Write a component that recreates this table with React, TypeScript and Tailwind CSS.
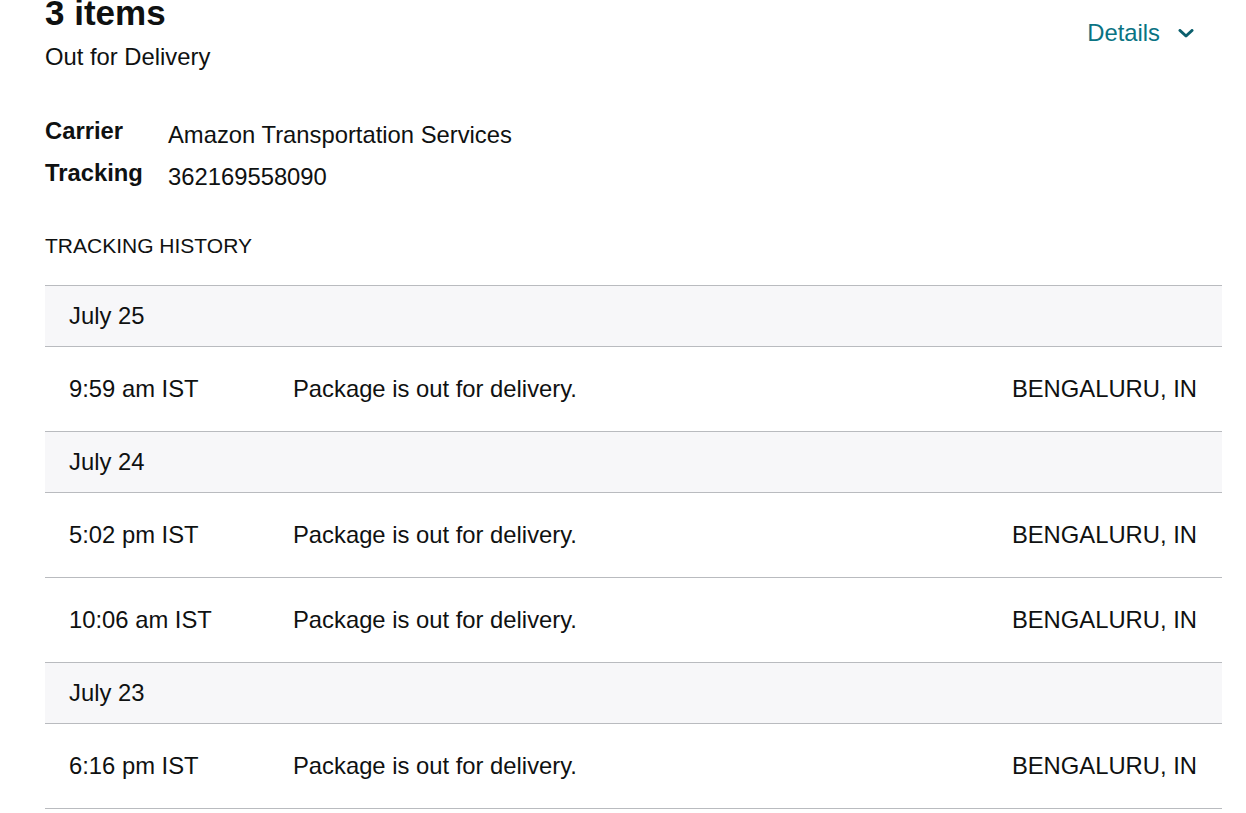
const events = [
  { date: 'July 25', items: [{ time: '9:59 am IST', text: 'Package is out for delivery.', place: 'BENGALURU, IN' }] },
  {
    date: 'July 24',
    items: [
      { time: '5:02 pm IST', text: 'Package is out for delivery.', place: 'BENGALURU, IN' },
      { time: '10:06 am IST', text: 'Package is out for delivery.', place: 'BENGALURU, IN' },
    ],
  },
  { date: 'July 23', items: [{ time: '6:16 pm IST', text: 'Package is out for delivery.', place: 'BENGALURU, IN' }] },
];

function Chevron() {
  return (
    <svg width="16" height="9" viewBox="0 0 16 9" fill="none">
      <path d="M2 1.5 L8 7 L14 1.5" stroke="#0b5f6d" strokeWidth="3" strokeLinecap="round" strokeLinejoin="round" />
    </svg>
  );
}

export default function App() {
  return (
    <div
      className="min-h-screen w-full overflow-hidden bg-white pl-[45px] pr-[24px] text-[#0f1111]"
      style={{ fontFamily: '"Liberation Sans", Arial, sans-serif' }}
    >
      <div className="-mt-[7px] flex items-start justify-between">
        <div>
          <h1 className="text-[35px] font-bold leading-[40px]">3 items</h1>
          <div className="mt-[9px] text-[23.8px] leading-[30px]">Out for Delivery</div>
        </div>
        <button className="mt-[25px] mr-[28px] flex items-center gap-[18px] text-[23.8px] leading-[30px] text-[#0a7383]">
          Details
          <Chevron />
        </button>
      </div>

      <div className="mt-[42px] text-[23.8px]">
        <div className="flex items-start">
          <div className="w-[123px] font-bold leading-[34px]">Carrier</div>
          <div className="leading-[42px]">Amazon Transportation Services</div>
        </div>
        <div className="flex items-start">
          <div className="w-[123px] font-bold leading-[34px]">Tracking</div>
          <div className="leading-[42px]">362169558090</div>
        </div>
      </div>

      <div className="mt-[36px] text-[21px] leading-[24px]">TRACKING HISTORY</div>

      <div className="mt-[27px] border-t border-[#b9bbbf] text-[23.8px]">
        {events.map((group) => (
          <div key={group.date}>
            <div className="flex h-[61px] items-center border-b border-[#b9bbbf] bg-[#f7f7f9] px-6">{group.date}</div>
            {group.items.map((e) => (
              <div key={e.time} className="flex h-[85px] items-center border-b border-[#b9bbbf] pl-6 pr-[25px]">
                <div className="w-[224px]">{e.time}</div>
                <div className="flex-1">{e.text}</div>
                <div>{e.place}</div>
              </div>
            ))}
          </div>
        ))}
      </div>
    </div>
  );
}
